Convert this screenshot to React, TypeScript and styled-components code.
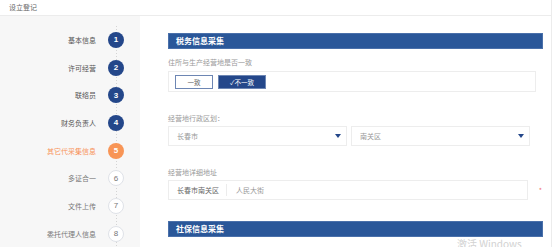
import styled, { createGlobalStyle } from 'styled-components';

const GlobalStyle = createGlobalStyle`
  html, body {
    margin: 0;
    padding: 0;
    background: #ffffff;
    overflow: hidden;
  }
  body {
    font-family: "Noto Sans CJK SC", "Liberation Sans", sans-serif;
  }
`;

type StepState = 'done' | 'active' | 'todo';

const steps: { label: string; state: StepState }[] = [
  { label: '基本信息', state: 'done' },
  { label: '许可经营', state: 'done' },
  { label: '联络员', state: 'done' },
  { label: '财务负责人', state: 'done' },
  { label: '其它代采集信息', state: 'active' },
  { label: '多证合一', state: 'todo' },
  { label: '文件上传', state: 'todo' },
  { label: '委托代理人信息', state: 'todo' },
];

const CaretDown = () => (
  <svg width="6" height="4" viewBox="0 0 6 4">
    <path d="M0 0 H6 L3 4 Z" fill="#24478a" />
  </svg>
);

export default function App() {
  return (
    <>
      <GlobalStyle />
      <Page>
        <Header>设立登记</Header>
        <Body>
          <Sidebar>
            <StepList>
              {steps.map((s, i) => (
                <Step key={s.label}>
                  <StepLabel state={s.state}>{s.label}</StepLabel>
                  <StepCircle state={s.state}>{i + 1}</StepCircle>
                </Step>
              ))}
            </StepList>
          </Sidebar>
          <Main>
            <SectionTitle>税务信息采集</SectionTitle>
            <FieldLabel>住所与生产经营地是否一致</FieldLabel>
            <ToggleBox>
              <ToggleButton>一致</ToggleButton>
              <ToggleButton selected>✓不一致</ToggleButton>
            </ToggleBox>

            <FieldLabel gap={21}>经营地行政区划：</FieldLabel>
            <SelectRow>
              <Select>
                <span>长春市</span>
                <CaretDown />
              </Select>
              <Select>
                <span>南关区</span>
                <CaretDown />
              </Select>
            </SelectRow>

            <FieldLabel gap={21}>经营地详细地址</FieldLabel>
            <AddressRow>
              <AddressInput>
                <Prefix>长春市南关区</Prefix>
                <InputText>人民大街</InputText>
              </AddressInput>
              <Required>*</Required>
            </AddressRow>

            <SectionTitle spaced>社保信息采集</SectionTitle>
          </Main>
        </Body>
        <Watermark>激活 Windows</Watermark>
      </Page>
    </>
  );
}

const Page = styled.div`
  position: relative;
  width: 552px;
  height: 247px;
  border-right: 1px solid #ececec;
  box-sizing: border-box;
  overflow: hidden;
`;

const Header = styled.div`
  height: 16px;
  box-sizing: border-box;
  padding-left: 9px;
  font-size: 7px;
  line-height: 15px;
  color: #666;
  border-bottom: 1px solid #ececec;
`;

const Body = styled.div`
  display: flex;
  height: 231px;
`;

const Sidebar = styled.div`
  width: 140px;
  flex: none;
  background: #f7f7f7;
  padding-top: 10px;
  box-sizing: border-box;
`;

const StepList = styled.div`
  display: flex;
  flex-direction: column;
  background: repeating-linear-gradient(to bottom, #d4d4d4 0 1px, transparent 1px 3px) 115.5px 0 / 1px 100%
    no-repeat;
`;

const Step = styled.div`
  display: flex;
  align-items: center;
  justify-content: flex-end;
  height: 27.7px;
  padding-right: 16px;
  gap: 12px;
`;

const StepLabel = styled.span<{ state: StepState }>`
  font-size: 7px;
  color: ${({ state }) => (state === 'active' ? '#f7935a' : state === 'done' ? '#555' : '#777')};
`;

const StepCircle = styled.div<{ state: StepState }>`
  width: 16px;
  height: 16px;
  box-sizing: border-box;
  border-radius: 50%;
  display: flex;
  align-items: center;
  justify-content: center;
  font-family: "Liberation Sans", sans-serif;
  font-size: 8px;
  font-weight: ${({ state }) => (state === 'todo' ? 400 : 700)};
  color: ${({ state }) => (state === 'todo' ? '#777' : '#fff')};
  background: ${({ state }) => (state === 'active' ? '#f89556' : state === 'done' ? '#24478a' : '#fff')};
  border: ${({ state }) => (state === 'todo' ? '1px solid #dfe2e8' : 'none')};
`;

const Main = styled.div`
  flex: 1;
  padding: 17px 8px 0 28px;
  display: flex;
  flex-direction: column;
  align-items: stretch;
`;

const SectionTitle = styled.div<{ spaced?: boolean }>`
  height: 16px;
  background: #2a5799;
  border: 1px solid #4a70aa;
  box-sizing: border-box;
  color: #fff;
  font-size: 8px;
  font-weight: 700;
  line-height: 14px;
  padding-left: 7px;
  margin-top: ${({ spaced }) => (spaced ? '21px' : '0')};
`;

const FieldLabel = styled.div<{ gap?: number }>`
  font-size: 7px;
  line-height: 10px;
  color: #999;
  margin-top: ${({ gap }) => gap ?? 8}px;
  margin-bottom: 3px;
`;

const ToggleBox = styled.div`
  display: flex;
  align-items: center;
  gap: 5px;
  height: 21px;
  box-sizing: border-box;
  margin-top: 1px;
  margin-right: 7px;
  padding-left: 6px;
  border: 1px solid #ededed;
`;

const ToggleButton = styled.div<{ selected?: boolean }>`
  height: 14px;
  width: ${({ selected }) => (selected ? '48px' : '38px')};
  box-sizing: border-box;
  display: flex;
  align-items: center;
  justify-content: center;
  font-size: 6.5px;
  color: ${({ selected }) => (selected ? '#fff' : '#666')};
  background: ${({ selected }) => (selected ? '#24478a' : '#fff')};
  border: 1px solid #6d86b3;
`;

const SelectRow = styled.div`
  display: flex;
  gap: 4px;
  margin-right: 13px;
`;

const Select = styled.div`
  flex: 1;
  height: 20px;
  box-sizing: border-box;
  border: 1px solid #ededed;
  display: flex;
  align-items: center;
  justify-content: space-between;
  padding: 0 5px 0 8px;
  font-size: 7px;
  color: #999;
`;

const AddressRow = styled.div`
  display: flex;
  align-items: center;
`;

const AddressInput = styled.div`
  flex: 1;
  height: 20px;
  box-sizing: border-box;
  border: 1px solid #ededed;
  display: flex;
  align-items: center;
  font-size: 7px;
`;

const Prefix = styled.span`
  color: #666;
  padding: 0 7px 0 8px;
  line-height: 12px;
  border-right: 1px solid #ececec;
`;

const InputText = styled.span`
  color: #999;
  padding-left: 9px;
`;

const Required = styled.span`
  width: 15px;
  text-align: right;
  padding-right: 1px;
  box-sizing: border-box;
  color: #f07070;
  font-size: 7px;
`;

const Watermark = styled.div`
  position: absolute;
  left: 457px;
  top: 238px;
  font-size: 10px;
  line-height: 12px;
  color: #d2d2d2;
  white-space: nowrap;
`;
